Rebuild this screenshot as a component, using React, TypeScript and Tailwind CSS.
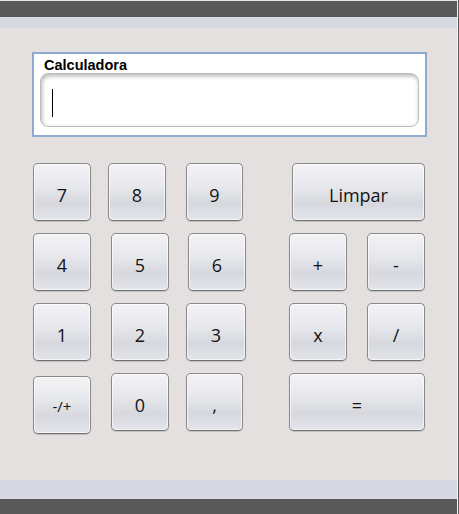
import React from "react";

const btnBase =
  "flex items-center justify-center h-[58px] pt-[5px] rounded-[5px] border border-[#8a8a8a] border-b-[#707070] bg-[linear-gradient(to_bottom,#f3f3f6_0%,#e7e8ec_40%,#d6d8de_70%,#e3e5eb_100%)] shadow-[inset_0_0_0_1px_rgba(255,255,255,0.65),0_1px_1px_rgba(0,0,0,0.15)] text-[#141414] font-['Open_Sans',sans-serif] text-[18px] leading-none";

function Btn({ label, className }: { label: string; className: string }) {
  return <div className={`${btnBase} ${className}`}>{label}</div>;
}

export default function App() {
  return (
    <div className="flex w-[459px] h-[514px] overflow-hidden">
      <div className="flex flex-col w-[457px] h-full">
        <div className="h-[1px] bg-[#e8e8e8]" />
        <div className="h-[16px] bg-[#595959]" />
        <div className="h-[11px] bg-[#d6d9e1]" />
        <div className="h-[452px] bg-[#e3e0df] flex flex-col pt-[24px]">
          <div className="ml-[32px] w-[395px] h-[85px] border-2 border-[#8eaacf] bg-white flex flex-col pt-[4px] px-[6px]">
            <div className="pl-[4px] font-['Liberation_Sans',Arial,sans-serif] font-bold text-[14.5px] leading-[15px] text-black">
              Calculadora
            </div>
            <div className="h-[54px] rounded-[8px] border border-[#bdbdbd] bg-white shadow-[inset_1px_2px_4px_rgba(0,0,0,0.3)] flex items-center pl-[11px]">
              <div className="w-px h-[28px] bg-black mt-[6px]" />
            </div>
          </div>

          <div className="mt-[26px] flex flex-col gap-[12px]">
            <div className="flex items-start">
              <Btn label="7" className="ml-[33px] w-[58px]" />
              <Btn label="8" className="ml-[17px] w-[58px]" />
              <Btn label="9" className="ml-[20px] w-[57px]" />
              <Btn label="Limpar" className="ml-[49px] w-[133px]" />
            </div>
            <div className="flex items-start">
              <Btn label="4" className="ml-[33px] w-[58px]" />
              <Btn label="5" className="ml-[20px] w-[58px]" />
              <Btn label="6" className="ml-[19px] w-[58px]" />
              <Btn label="+" className="ml-[43px] w-[58px]" />
              <Btn label="-" className="ml-[20px] w-[58px]" />
            </div>
            <div className="flex items-start">
              <Btn label="1" className="ml-[33px] w-[58px]" />
              <Btn label="2" className="ml-[20px] w-[58px]" />
              <Btn label="3" className="ml-[17px] w-[60px]" />
              <Btn label="x" className="ml-[43px] w-[58px]" />
              <Btn label="/" className="ml-[20px] w-[58px]" />
            </div>
            <div className="flex items-start">
              <div className={`${btnBase} ml-[33px] w-[58px] mt-[3px] !text-[15px] !pt-[3px]`}>-/+</div>
              <Btn label="0" className="ml-[20px] w-[58px]" />
              <Btn label="," className="ml-[17px] w-[57px]" />
              <Btn label="=" className="ml-[46px] w-[136px]" />
            </div>
          </div>
        </div>
        <div className="h-[19px] bg-[#d6d9e1]" />
        <div className="flex-1 bg-[#595959]" />
      </div>
      <div className="w-[1px] h-full bg-[#f4f4f4]" />
      <div className="w-[1px] h-full bg-[#5a5a5a]" />
    </div>
  );
}
